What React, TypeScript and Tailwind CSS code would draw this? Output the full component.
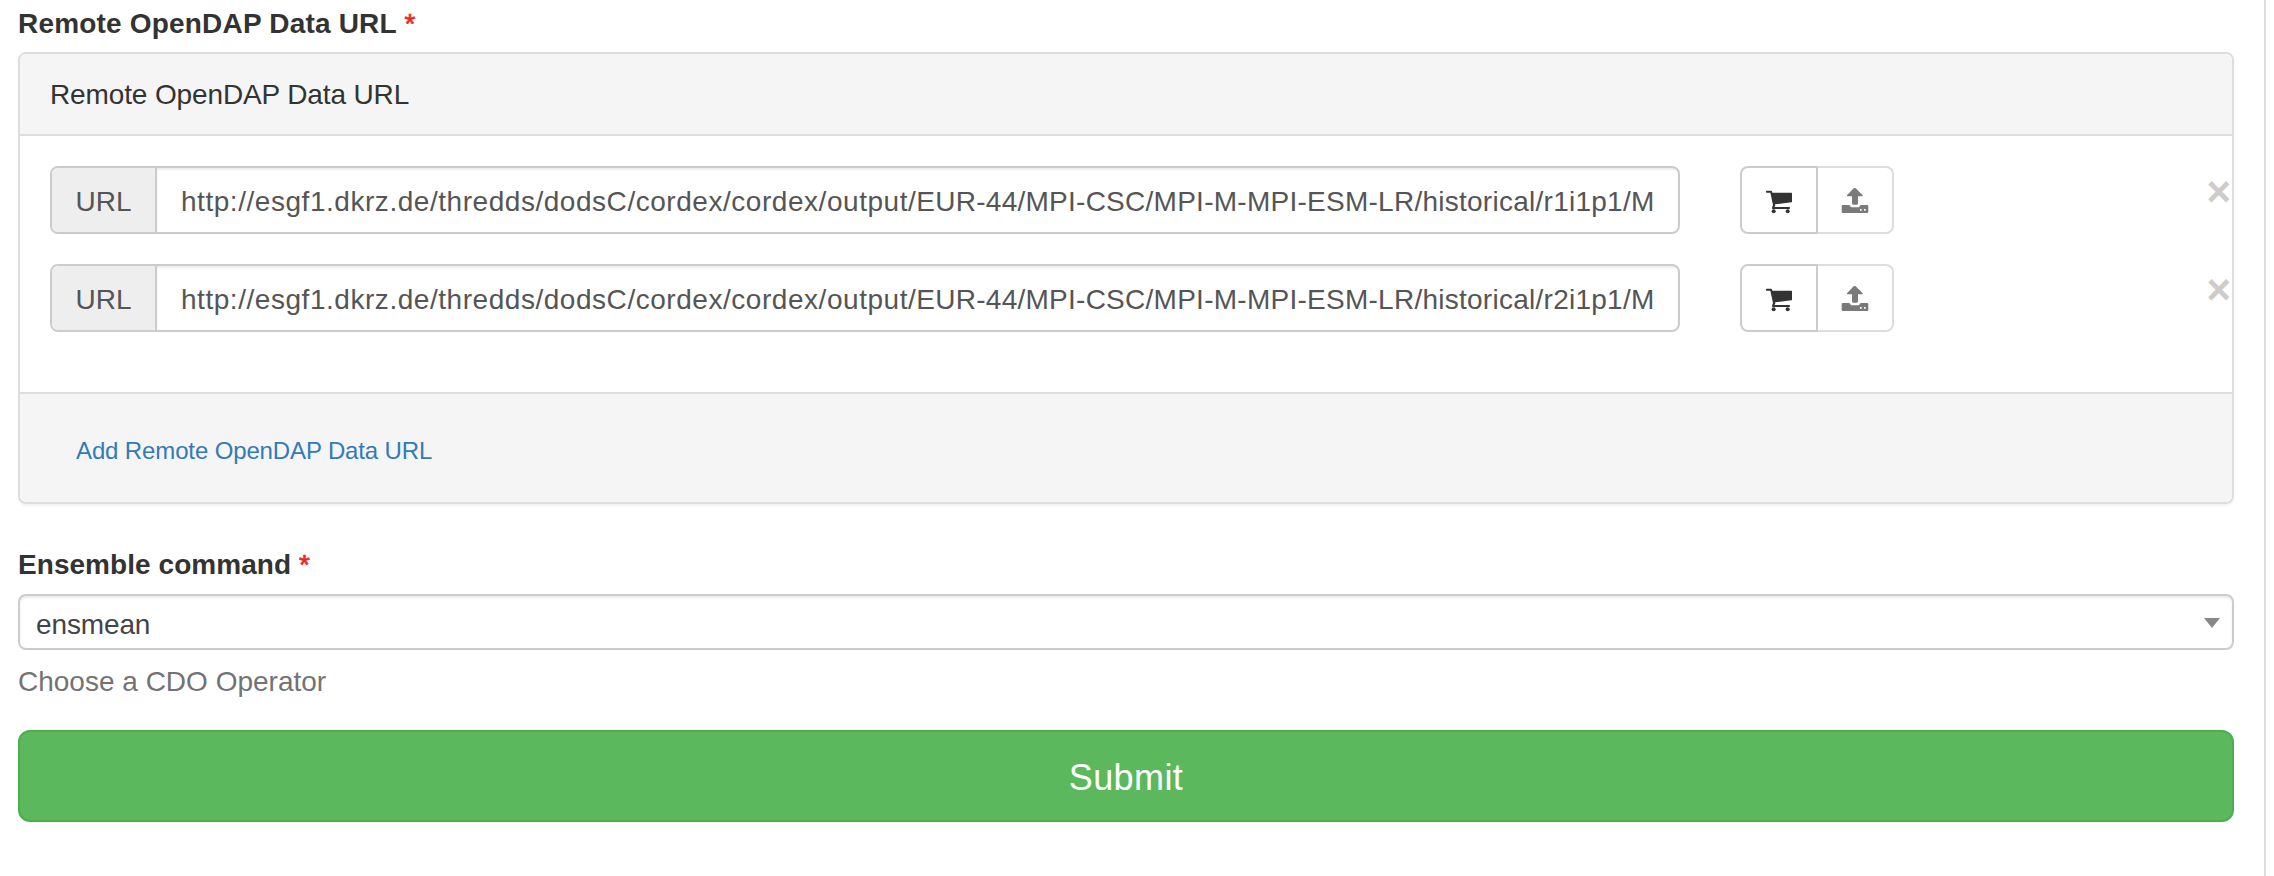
const DATA_ROWS = [
  { id: 'r1', host: 'http://esgf1.dkrz.de/thredds/dodsC/cordex/cordex/output/', path: 'EUR-44/MPI-CSC/MPI-M-MPI-ESM-LR/historical/r1i1p1/M' },
  { id: 'r2', host: 'http://esgf1.dkrz.de/thredds/dodsC/cordex/cordex/output/', path: 'EUR-44/MPI-CSC/MPI-M-MPI-ESM-LR/historical/r2i1p1/M' },
];

function CartIcon() {
  return (
    <svg viewBox="0 0 84 84" className="mt-1 size-7" fill="#333">
      <path d="M4 8h14q2 0 3 2l1 4h57q2 0 2 2v25q0 2-2 2l-49 6 1 4-3 4h45q2 0 2 3t-2 3H23q-3-1-2-4l3-8-8-37H4q-2-3 0-6z" />
      <circle cx="26" cy="70" r="6" />
      <circle cx="68" cy="70" r="6" />
    </svg>
  );
}

function UploadIcon() {
  return (
    <svg viewBox="0 0 84 84" className="mt-1 size-7" fill="#7a7a7a" fillRule="evenodd">
      <path d="M41 0q2 0 3 1l21 21q1 3-2 3H51v21q0 4-4 4H37q-4 0-4-4V25H20q-3 0-2-3L38 1q1-1 3-1z" />
      <path d="M6 51h19l4 5q2 2 5 2h16q3 0 5-2l4-5h19q4 0 4 4v16q0 4-4 4H6q-4 0-4-4V55q0-4 4-4zM57 63v5h5v-5zM69 63v5h5v-5z" />
    </svg>
  );
}

function Label({ text, tracking }: { text: string; tracking: string }) {
  return (
    <label className="block h-10 text-[28px] leading-10 font-bold">
      <span className={tracking}>{text}</span> <span className="font-normal text-[#f0281e] [-webkit-text-stroke:0.7px_#f0281e]">*</span>
    </label>
  );
}

function UrlRow({ host, path }: { host: string; path: string }) {
  return (
    <div className="flex h-[68px]">
      <div className="flex w-[1630px] shrink-0 overflow-hidden rounded-lg border-2 border-[#ccc] text-[28px] leading-10 text-[#555]">
        <span className="flex w-[105px] shrink-0 items-center justify-center border-r-2 border-[#ccc] bg-[#eee] pt-[3px]">URL</span>
        <div className="flex grow items-center overflow-hidden pt-[3px] pl-6 whitespace-nowrap shadow-[inset_0_2px_2px_rgba(0,0,0,0.075)]">
          <span className="tracking-[0.54px]">{host}</span>
          <span className="tracking-[0.26px]">{path}</span>
        </div>
      </div>
      <div className="ml-[60px] flex">
        <button className="flex w-[78px] items-center justify-center rounded-l-lg border-2 border-[#ccc]">
          <CartIcon />
        </button>
        <button className="flex w-[76px] items-center justify-center rounded-r-lg border-2 border-l-0 border-[#ddd]">
          <UploadIcon />
        </button>
      </div>
      <button className="mt-[5px] ml-auto -mr-[33px] h-[42px] pr-1 text-[42px] leading-[42px] font-bold text-[#ccc]">×</button>
    </div>
  );
}

export default function App() {
  return (
    <div className="h-[876px] w-[2266px] overflow-hidden border-r-2 border-[#ddd] bg-white pt-1 pr-[30px] pl-[18px] font-['Liberation_Sans',Arial,sans-serif] text-[#333]">
      <Label text="Remote OpenDAP Data URL" tracking="tracking-[0.19px]" />
      <section className="mt-2 h-[452px] overflow-hidden rounded-lg border-2 border-[#ddd] shadow-[0_2px_2px_rgba(0,0,0,0.05)]">
        <header className="h-[82px] border-b-2 border-[#ddd] bg-[#f5f5f5] px-[30px] pt-[21px] text-[28px] leading-10 tracking-[-0.13px]">
          Remote OpenDAP Data URL
        </header>
        <div className="flex flex-col gap-[30px] px-[30px] pt-[30px] pb-[60px]">
          {DATA_ROWS.map((row) => (
            <UrlRow key={row.id} host={row.host} path={row.path} />
          ))}
        </div>
        <footer className="flex h-[110px] items-center border-t-2 border-[#ddd] bg-[#f5f5f5] pt-[6px] pl-14 text-2xl tracking-[-0.13px] text-[#337ab7]">
          <a>Add Remote OpenDAP Data URL</a>
        </footer>
      </section>
      <div className="mt-[41px]">
        <Label text="Ensemble command" tracking="tracking-[0.05px]" />
      </div>
      <div className="mt-[9px] flex h-14 items-center justify-between rounded-lg border-2 border-[#ccc] pr-3 pl-4 text-[28px] leading-10 text-[#444] shadow-[inset_0_2px_2px_rgba(0,0,0,0.075)]">
        <span className="pt-[5px] tracking-[-0.13px]">ensmean</span>
        <svg viewBox="0 0 16 10" className="mt-[2px] h-[10px] w-4" fill="#888">
          <path d="M0 0h16L8 10z" />
        </svg>
      </div>
      <p className="mt-3 text-[28px] leading-10 text-[#737373]">Choose a CDO Operator</p>
      <button className="mt-7 flex h-[92px] w-full items-center justify-center rounded-xl border-2 border-[#4cae4c] bg-[#5cb85c] pt-[3px] text-4xl tracking-[0.4px] text-white">
        Submit
      </button>
    </div>
  );
}
